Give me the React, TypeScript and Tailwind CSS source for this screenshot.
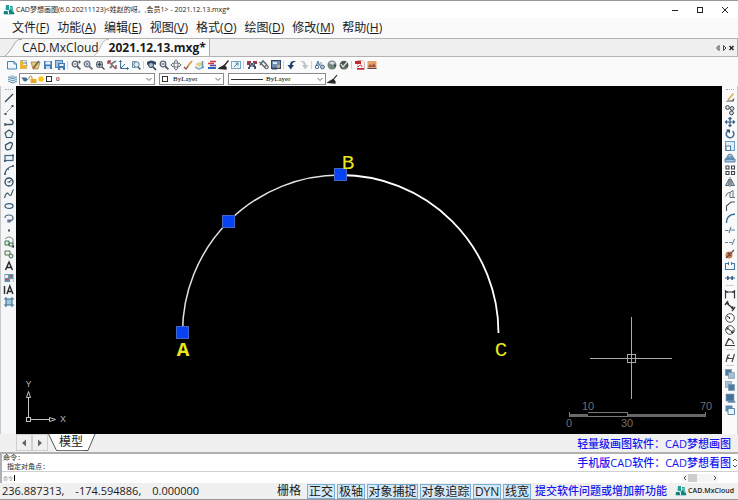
import { Fragment, type ReactNode } from "react";

type Tool = { name: string; art: ReactNode };

const lens = (color: string) => (
  <g fill="none" stroke={color}>
    <circle cx="5" cy="5" r="2.8" strokeWidth="1.3" />
    <path d="M7 7l3.4 3.4" strokeWidth="2" />
  </g>
);

const fileTools: Tool[][] = [
  [
    {
      name: "新建",
      art: <path d="M1.5 2.5h6.5l2.5 2.5v5h-9zM8 2.5v2.5h2.5" fill="#eef7fd" stroke="#4584b0" />,
    },
    {
      name: "打开",
      art: (
        <>
          <path d="M2.5 1.5h6v8h-6z" fill="#f4f7f9" stroke="#9fb3bf" />
          <path d="M2 2h3v8H2zM4 6h6l-2 4H2z" fill="#e9b53b" />
          <path d="M5 4h4" stroke="#5b7d95" />
        </>
      ),
    },
    {
      name: "打开图纸",
      art: (
        <>
          <path d="M1 3h9L8 10H3z" fill="#e6c877" stroke="#8c7a4c" strokeWidth=".7" />
          <path d="M4 8l5-6" stroke="#56606b" strokeWidth="1.4" />
          <path d="M3 9l2-1" stroke="#c6432f" strokeWidth="1.5" />
        </>
      ),
    },
    {
      name: "保存",
      art: (
        <>
          <rect x="2" y="2" width="8" height="8" fill="#3f7cb8" />
          <rect x="3.5" y="2.5" width="5" height="3" fill="#e8f1f8" />
          <rect x="4" y="7" width="4" height="3" fill="#c7dbea" />
        </>
      ),
    },
    {
      name: "另存为",
      art: (
        <>
          <rect x="1.5" y="1.5" width="7" height="7" fill="#9fc3df" stroke="#4785b5" />
          <rect x="4" y="4" width="7" height="7" fill="#3f7cb8" />
          <path d="M5.5 5h4v2h-4zM6 9h3v2H6z" fill="#e8f1f8" />
        </>
      ),
    },
  ],
  [
    {
      name: "实时缩放",
      art: (
        <>
          {lens("#5a6470")}
          <path d="M8 3h3M9.5 1.5v3M3.5 5h3" stroke="#46525f" strokeWidth=".9" />
        </>
      ),
    },
    {
      name: "放大",
      art: (
        <>
          {lens("#6a7681")}
          <path d="M3.5 5h3M5 3.5v3" stroke="#425e80" strokeWidth=".9" />
        </>
      ),
    },
    {
      name: "窗口缩放",
      art: (
        <>
          <rect x="2.5" y="2.5" width="6" height="6" rx="2" fill="#bac2ca" stroke="#55616b" />
          <path d="M3.5 5.5h4M5.5 3.5v4M8 8l2.5 2.5" stroke="#414c56" strokeWidth="1.3" />
        </>
      ),
    },
    {
      name: "范围缩放",
      art: (
        <>
          <path d="M2 2l8 8M2 2h3M2 2v3M10 10V6" stroke="#984b51" strokeWidth="1.4" fill="none" />
          <path d="M5 5l5-3M4 9l3-3" stroke="#737e89" strokeWidth="1.8" />
        </>
      ),
    },
    {
      name: "坐标系",
      art: <path d="M2.5 1.5v8h8M1.2 3l1.3-1.5L3.8 3M9 8.2l1.5 1.3L9 10.8M3 9l4-4" fill="none" stroke="#3c719b" />,
    },
    {
      name: "上一个视图",
      art: (
        <>
          <path d="M2.5 2.5h3M2.5 2.5v6h3" fill="none" stroke="#5a8cb0" />
          <circle cx="6.5" cy="5.5" r="2.7" fill="#e2eef5" stroke="#567792" />
          <path d="M8 8l2.4 2.4" stroke="#456078" strokeWidth="1.6" />
        </>
      ),
    },
  ],
  [
    {
      name: "重生成",
      art: (
        <>
          <path d="M1 3q4-3 9 0v3q-4-3-9 0z" fill="#33496a" />
          <circle cx="5" cy="6" r="2.5" fill="#aab9c9" stroke="#2d405c" />
          <path d="M7 8l3 3" stroke="#2d405c" strokeWidth="1.7" />
        </>
      ),
    },
    {
      name: "缩小",
      art: (
        <>
          {lens("#586777")}
          <path d="M3.5 5h3" stroke="#28435e" />
        </>
      ),
    },
    {
      name: "平移",
      art: (
        <path
          d="M6 .8l2 2.4H7v1.8h1.8V4l2.4 2-2.4 2V7H7v1.8h1l-2 2.4-2-2.4h1V7H3.2v1L.8 6l2.4-2v1H5V3.2H4z"
          fill="#f2f3f4"
          stroke="#59636d"
          strokeWidth=".9"
        />
      ),
    },
    {
      name: "画笔",
      art: (
        <>
          <path d="M5 8l5-6" stroke="#d59845" strokeWidth="1.8" />
          <path d="M2 8l2 2 2-2.500" stroke="#834d3e" fill="none" strokeWidth="1.2" />
        </>
      ),
    },
    {
      name: "图层管理",
      art: (
        <>
          <path d="M1 5l5-2 4 2-5 3z" fill="#dcd681" />
          <path d="M1 7l4 2 5-2v2l-5 2-4-2z" fill="#8bb3cc" />
          <path d="M8.5 2v7" stroke="#5d97c0" strokeWidth="1.5" />
        </>
      ),
    },
    {
      name: "颜色",
      art: (
        <>
          <path d="M4 2.500h6M2 4.500h6" stroke="#cf3a41" strokeWidth="1.6" />
          <path d="M4 6.500h6" stroke="#5d4a9e" strokeWidth="1.6" />
          <path d="M2 9h8" stroke="#2868bd" strokeWidth="2" />
        </>
      ),
    },
    {
      name: "格式刷",
      art: <path d="M10.5 1.5L6 7M1 9.500l5-3 2 2v1.5z" stroke="#22262a" strokeWidth="1.3" fill="#22262a" />,
    },
    {
      name: "适应窗口",
      art: (
        <>
          <rect x="1.5" y="2.5" width="9" height="7" fill="#ecf6fb" stroke="#72a7c7" />
          <path d="M4 8l4-4M5.5 4H8v2.5" fill="none" stroke="#3d84a8" />
        </>
      ),
    },
  ],
  [
    {
      name: "图块",
      art: (
        <>
          <path d="M1 2h4v4H1zM7 2h4v3H7z" fill="#9d354b" />
          <path d="M3 4h6v4H3zM2 8h2v2H2zM8 7h2v3H8z" fill="#46526e" />
          <path d="M4 5h1M7 5h1M5 7h2" stroke="#e3e5ec" />
        </>
      ),
    },
    {
      name: "工具",
      art: (
        <>
          <path d="M1.5 3l6 6M2 6l3-4 4 4" fill="none" stroke="#646a72" strokeWidth="1.5" />
          <circle cx="8.5" cy="8" r="1.8" fill="#c9ccd0" stroke="#55595f" />
        </>
      ),
    },
    {
      name: "插入图片",
      art: (
        <>
          <rect x="1.5" y="1.5" width="9" height="8" fill="#7190b1" stroke="#304865" />
          <path d="M3 3h4v2H3z" fill="#dce6ef" />
          <path d="M7 6h3v3H7z" fill="#dba071" />
          <path d="M2 8.500h5v2H2z" fill="#304865" />
        </>
      ),
    },
  ],
  [
    { name: "撤销", art: <path d="M10 2.500C6 1 4 3 4 6H1.500l3.300 4.500L8 6H6.200C6 4.200 7.500 3 10 2.500z" fill="#22406f" /> },
    { name: "重做", art: <path d="M2 2.500C6 1 8 3 8 6h2.500l-3.300 4.500L4 6h1.800C6 4.200 4.500 3 2 2.500z" fill="#c1c5c9" /> },
  ],
  [
    {
      name: "查找",
      art: (
        <>
          <path d="M2 7l2-5 2 5M3 5h2" fill="none" stroke="#55799b" />
          <circle cx="3" cy="8" r="1.7" fill="none" stroke="#47698a" />
          <circle cx="8.5" cy="8" r="1.9" fill="#b7cbdc" stroke="#47698a" />
          <path d="M7 3v4" stroke="#7790a6" />
        </>
      ),
    },
    {
      name: "网络",
      art: (
        <>
          <circle cx="6" cy="6" r="4.5" fill="#76808a" />
          <path d="M3 4q3-3 6 0l-2 2-2-1z" fill="#d5dade" />
          <path d="M3 7l2-1 2 3-2 1z" fill="#5b9b52" />
          <path d="M8 5l2 1-1 3z" fill="#353d46" />
        </>
      ),
    },
    {
      name: "云图",
      art: (
        <>
          <circle cx="6" cy="6.2" r="4.4" fill="#4c5851" />
          <path d="M3 5l2 3 4-5" fill="none" stroke="#e1e8e3" strokeWidth="1.3" />
          <path d="M5 9h4" stroke="#82a07a" />
        </>
      ),
    },
  ],
  [
    {
      name: "输出PDF",
      art: (
        <>
          <path d="M3.5 1.500h5l2 2v7h-7z" fill="#fbf5f5" stroke="#c9a3a5" strokeWidth=".8" />
          <path d="M1 2h6v3H1zM3 9h7v1.500H3z" fill="#c6272e" />
          <path d="M4 8q3-4 4 0" fill="none" stroke="#c6272e" />
        </>
      ),
    },
    {
      name: "输出图片",
      art: (
        <>
          <rect x="1.5" y="2" width="9" height="8" fill="#e4a26f" />
          <path d="M2 8l2-3 2 1.500L8 4l2 4z" fill="#a3593e" />
          <path d="M1.5 9.500h9" stroke="#524c5b" />
        </>
      ),
    },
  ],
];

const drawTools: Tool[] = [
  { name: "直线", art: <path d="M2 10l8-8" stroke="#2f4859" strokeWidth="1.2" /> },
  {
    name: "构造线",
    art: (
      <>
        <path d="M2 10l8-8" stroke="#5b6f7c" strokeDasharray="2 1" />
        <path d="M1.5 9h2v2h-2zM8.5 1h2v2h-2z" fill="#3a505d" />
      </>
    ),
  },
  { name: "多段线", art: <path d="M2 8.500h6q2.500 0 2-2.500t-3-2M2 7v3" fill="none" stroke="#38505f" strokeWidth="1.3" /> },
  { name: "多边形", art: <path d="M6 2l4 3-1.500 4.500h-5L2 5z" fill="#eef3f5" stroke="#3d5561" strokeWidth="1.2" /> },
  { name: "云线", art: <path d="M7 2.500q3.500 0 2 3L7.500 9q-4 2-5-1V5z" fill="#eef3f5" stroke="#3d5561" strokeWidth="1.3" /> },
  {
    name: "矩形",
    art: (
      <>
        <rect x="2" y="3.5" width="8" height="5" fill="#eef3f7" stroke="#41627a" strokeWidth="1.2" />
        <path d="M1 8h2v2H1zM9 2.500h2v2H9z" fill="#41627a" />
      </>
    ),
  },
  {
    name: "圆弧",
    art: (
      <>
        <path d="M2 10Q2.500 3.500 10 2" fill="none" stroke="#38536a" strokeWidth="1.2" />
        <path d="M1 9h2v2H1zM4 4h2v2H4zM9 1h2v2H9z" fill="#56758a" />
      </>
    ),
  },
  {
    name: "圆",
    art: (
      <>
        <circle cx="6" cy="6" r="4" fill="none" stroke="#2e4b60" strokeWidth="1.3" />
        <path d="M6 6l3-2.500M4.500 6h3" stroke="#2e4b60" />
      </>
    ),
  },
  { name: "样条曲线", art: <path d="M1.5 10q2-7 4-4t3 0T10.500 1.500" fill="none" stroke="#455a67" strokeWidth="1.2" /> },
  { name: "椭圆", art: <ellipse cx="6" cy="6" rx="4" ry="2.4" fill="none" stroke="#385d7d" strokeWidth="1.3" /> },
  { name: "椭圆弧", art: <path d="M2 6q0-3 4-3t4 3-4 3M5 8h2v2H5z" fill="none" stroke="#486782" strokeWidth="1.2" /> },
  { name: "点", art: <rect x="5" y="5.5" width="2" height="2" fill="#3e5669" /> },
  {
    name: "插入块",
    art: (
      <>
        <path d="M2 3q4-4 8 0v5" fill="none" stroke="#759079" />
        <path d="M2 5h4v4H2zM6 7h4v3H6z" fill="#deeadd" stroke="#3f7357" />
        <path d="M11 9v2.500H8.500z" fill="#20282b" />
      </>
    ),
  },
  {
    name: "创建块",
    art: (
      <>
        <path d="M2 3h5v4H2z" fill="#ebf0ea" stroke="#556e52" />
        <circle cx="8" cy="8" r="2" fill="#e3ebe1" stroke="#3f6952" />
      </>
    ),
  },
  { name: "文字", art: <path d="M2.5 10L6 2l3.500 8M3.800 7.500h4.400" fill="none" stroke="#262b2f" strokeWidth="1.5" /> },
  {
    name: "填充",
    art: (
      <>
        <rect x="1.5" y="2" width="9" height="8" fill="#6596ae" />
        <path d="M2 3h3v3H2zM7 7h3v3H7z" fill="#e4ecef" />
        <path d="M2.5 6.500h3v2h-3zM7 3h2v2H7z" fill="#bd5359" />
      </>
    ),
  },
  { name: "多行文字", art: <path d="M1.5 2v8M4 10l2.800-8L10 10M5 7.500h4" fill="none" stroke="#262b2f" strokeWidth="1.4" /> },
  {
    name: "边界",
    art: (
      <>
        <rect x="3" y="3" width="6" height="6" fill="#9dc7df" />
        <path d="M3 1v10M9 1v10M1 3h10M1 9h10" stroke="#3e6f8f" strokeWidth="1.1" />
      </>
    ),
  },
];

const stack = (front: string, back: string) => (
  <>
    <rect x="1.5" y="1.5" width="6" height="6" fill={back} stroke="#7394ac" strokeWidth=".6" />
    <rect x="4.5" y="4.5" width="6" height="6" fill={front} stroke="#7394ac" strokeWidth=".6" />
  </>
);

const editTools: Tool[][] = [
  [
    {
      name: "删除",
      art: (
        <>
          <path d="M4 8l5.500-6.500" stroke="#d9b465" strokeWidth="1.8" />
          <path d="M1.5 9.500h8L10.500 6l-3 2.500H3.500z" fill="#4a5353" />
        </>
      ),
    },
    {
      name: "复制",
      art: (
        <g fill="#d9dee2" stroke="#3d4850">
          <circle cx="3.5" cy="3.5" r="1.9" />
          <circle cx="8" cy="4.5" r="1.9" />
          <circle cx="7.5" cy="9" r="1.9" />
        </g>
      ),
    },
    {
      name: "移动",
      art: (
        <path
          d="M6 1.500v9M1.500 6h9M4.500 3L6 1.500 7.500 3M4.500 9L6 10.500 7.500 9M3 4.500L1.500 6 3 7.500M9 4.500L10.500 6 9 7.500"
          fill="none"
          stroke="#345d89"
          strokeWidth="1.2"
        />
      ),
    },
    {
      name: "旋转",
      art: (
        <>
          <path d="M4 2.800a3.800 3.800 0 1 0 4.500.3" fill="none" stroke="#426f9d" strokeWidth="1.6" />
          <path d="M2 1.500h4v4z" fill="#29496c" />
        </>
      ),
    },
    {
      name: "缩放",
      art: (
        <>
          <rect x="1.5" y="1.5" width="9" height="9" fill="#deedf7" stroke="#6a9dc2" />
          <rect x="2" y="6" width="4.5" height="4.5" fill="#fff" stroke="#497ca3" />
        </>
      ),
    },
    {
      name: "偏移",
      art: <path d="M2 7l2-4 2-1 2 1 2 4zM1 10V7h10v3zM4 7V5h4v2" fill="#a9c5dc" stroke="#47779d" strokeWidth=".9" />,
    },
    {
      name: "阵列",
      art: (
        <path
          d="M2 2h3v3H2zM7.5 2h3v3h-3zM2 7.500h3v3H2zM7.5 7.500h3v3h-3z"
          fill="#f6f6f6"
          stroke="#3d444b"
          strokeWidth="1.1"
        />
      ),
    },
    { name: "镜像", art: <path d="M5 3v6.500H1.500zM7 3v6.500h3.500zM6 1v10" fill="#aebac4" stroke="#4f606e" strokeWidth=".9" /> },
    { name: "拉伸", art: <path d="M1.5 8.500q2-5 4.500-4v5M6 4.500l3-2v7M6 9.500h5" fill="none" stroke="#65717b" /> },
    { name: "倒角", art: <path d="M2.5 11V6L7 2h4" fill="none" stroke="#45525d" strokeWidth="1.1" /> },
    { name: "圆角", art: <path d="M2.5 11Q2 3 11 2" fill="none" stroke="#386c9c" strokeWidth="1.4" /> },
    { name: "修剪", art: <path d="M1 6.500h3.500M7 6h4M7 3L5 9" fill="none" stroke="#597f9d" strokeWidth="1.1" /> },
    { name: "延伸", art: <path d="M1 6.500h3M5 6.500h3M10.500 3L8 9" fill="none" stroke="#66869e" strokeWidth="1.1" /> },
    {
      name: "分解",
      art: (
        <>
          <circle cx="5" cy="7" r="3.5" fill="#ca8254" />
          <path d="M4 8l6-6M2 10l2-2M4 5l3 3" stroke="#654439" strokeWidth="1.2" />
        </>
      ),
    },
    { name: "打断", art: <path d="M4.5 3.500h-3v6h9v-6h-3M4.500 2v3M7.500 2v3" fill="none" stroke="#4278a0" strokeWidth="1.1" /> },
    { name: "合并", art: <path d="M1 6h4M11 6H7M3.500 4L5.500 6l-2 2zM8.500 4l-2 2 2 2z" fill="#355f89" stroke="#355f89" /> },
  ],
  [
    { name: "线性标注", art: <path d="M1.5 2v8.500M10.500 2v8.500M1.500 4h9M3 3v2M9 3v2" fill="none" stroke="#30363b" strokeWidth="1.2" /> },
    {
      name: "对齐标注",
      art: <path d="M2.5 3l7 6M1 5l3-4M8 11l3-4M3 3.500h2M7.500 8.500l1.500-2" fill="none" stroke="#2c3237" strokeWidth="1.3" />,
    },
    {
      name: "半径标注",
      art: (
        <>
          <circle cx="6" cy="6" r="4.3" fill="none" stroke="#4d5459" />
          <path d="M6 6L3 4M5.500 5v2" stroke="#2c3237" />
        </>
      ),
    },
    {
      name: "直径标注",
      art: (
        <>
          <circle cx="6" cy="6" r="4.3" fill="none" stroke="#4d5459" />
          <path d="M3 4l6 4.500M3 6V4h2M9 6v2.500H7" fill="none" stroke="#2c3237" />
        </>
      ),
    },
    { name: "角度标注", art: <path d="M5 2L1.500 9.500H11M5 3q4 1 4.500 5M3 5l3-2" fill="none" stroke="#363c41" strokeWidth="1.2" /> },
  ],
  [
    {
      name: "快速标注",
      art: <path d="M2 10L4 3M8 10l2.500-8M3 6.500h6M4 3h2M4.500 5l-1.500 2" fill="none" stroke="#42484d" strokeWidth="1.2" />,
    },
  ],
  [
    { name: "前置", art: stack("#a6bfd3", "#4d7ba5") },
    { name: "后置", art: stack("#4d7ba5", "#a6bfd3") },
    { name: "置于对象之上", art: <path d="M2 2h8v7H2zM4 9h7v1.500H4z" fill="#467199" stroke="#7e9eb8" strokeWidth=".6" /> },
    {
      name: "置于对象之下",
      art: (
        <>
          <path d="M1.5 1.500h7v6h-7z" fill="#5a87ac" />
          <path d="M4 4.500h6.500v6H4z" fill="#edf4f9" stroke="#5a87ac" />
        </>
      ),
    },
  ],
];

const menus = [
  ["文件", "F"],
  ["功能", "A"],
  ["编辑", "E"],
  ["视图", "V"],
  ["格式", "O"],
  ["绘图", "D"],
  ["修改", "M"],
  ["帮助", "H"],
];

const modes = [
  { label: "正交", width: "w-7" },
  { label: "极轴", width: "w-7" },
  { label: "对象捕捉", width: "w-[51px]" },
  { label: "对象追踪", width: "w-[51px]" },
  { label: "DYN", width: "w-7" },
  { label: "线宽", width: "w-7" },
];

function Icon({ children }: { children: ReactNode }) {
  return (
    <svg viewBox="0 0 12 12" className="block size-3 shrink-0" aria-hidden="true">
      {children}
    </svg>
  );
}

function ToolButton({ tool }: { tool: Tool }) {
  return (
    <button title={tool.name} aria-label={tool.name} className="block size-3 shrink-0">
      <Icon>{tool.art}</Icon>
    </button>
  );
}

function Logo() {
  return (
    <Icon>
      <path d="M3 1h3v5H2.500zM7 2h2.500L10 6H7z" fill="#1d9d94" />
      <path d="M1 7h4v3H.5zM6 6h4l1.500 4H6z" fill="#14807f" />
      <path d="M2 4l3 4 3-5 2 5M1 10.500h10" stroke="#8fd2cd" strokeWidth=".8" fill="none" />
    </Icon>
  );
}

function Chevron() {
  return (
    <svg viewBox="0 0 8 8" className="pointer-events-none size-2 shrink-0" aria-hidden="true">
      <path d="M1.5 3L4 5.500 6.500 3" fill="none" stroke="#666" />
    </svg>
  );
}

function Combo({ label, value, width, children }: { label: string; value: string; width: string; children?: ReactNode }) {
  return (
    <div className={`flex h-3 items-center border border-[#8c8c8c] bg-white pr-px ${width}`}>
      {children}
      <select
        aria-label={label}
        className="h-full min-w-0 flex-1 appearance-none bg-transparent font-['Liberation_Serif','Noto_Sans_CJK_SC',serif] text-[7px] leading-[10px] text-black outline-none"
      >
        <option>{value}</option>
      </select>
      <Chevron />
    </div>
  );
}

function Drawing() {
  return (
    <svg viewBox="0 0 706 347" className="block h-auto w-full" role="img" aria-label="模型空间">
      <path d="M166.5 247A158 158 0 0 1 324.500 89" fill="none" stroke="#e2e2e2" strokeWidth="1.5" />
      <path d="M324.5 89A158 158 0 0 1 482.500 247" fill="none" stroke="#fff" strokeWidth="1.8" />
      <g fill="#0842f5" stroke="#3f68c8" strokeWidth="1">
        <rect x="160.5" y="240.5" width="12" height="12" />
        <rect x="206.5" y="129.5" width="12" height="12" />
        <rect x="318.5" y="82.5" width="12" height="12" />
      </g>
      <g fill="#e8e81c" fontFamily="Liberation Mono, monospace" fontSize="21" textAnchor="middle">
        <text x="167" y="270" fontWeight="700">A</text>
        <text x="332" y="83">B</text>
        <text x="485" y="270">C</text>
      </g>

      <g fill="none" stroke="#c4c4c4">
        <rect x="10.5" y="331.5" width="4" height="4" />
        <path d="M12.5 331v-20M10.500 311.500l2-6 2 6zM15 333.500h18M33.500 331.500l6 2-6 2z" />
      </g>
      <g fill="#b5b5b5" fontFamily="Liberation Sans, sans-serif" fontSize="9" textAnchor="middle">
        <text x="12.5" y="301">Y</text>
        <text x="47" y="336">X</text>
      </g>

      <g fill="none" stroke="#a9a9a9">
        <path d="M574 272.500h82M615.500 231v82" />
        <rect x="611.5" y="268.5" width="8" height="8" />
      </g>

      <path d="M553 328h19v3h-19zM611 328h79v3h-79z" fill="#686868" />
      <path d="M553.5 326v5M572 326.500h39M572 330.500h39M611.500 326v5M689.500 326v5" stroke="#777" fill="none" />
      <g fill="#6f6f6f" fontFamily="Liberation Sans, sans-serif" fontSize="11" textAnchor="middle">
        <text x="572" y="324">10</text>
        <text x="690" y="324">70</text>
        <text x="553" y="341">0</text>
        <text x="611" y="341">30</text>
      </g>
    </svg>
  );
}

export default function App() {
  return (
    <div className="flex min-h-screen flex-col bg-[#f0f0f0] font-['Open_Sans','Noto_Sans_CJK_SC',sans-serif] text-xs text-[#1c1c1c]">
      <header className="flex h-[18px] items-center justify-between border-t border-[#999] bg-white pr-[7px] pl-[3px]">
        <div className="flex items-center gap-px">
          <Logo />
          <h1 className="text-[7px] leading-3 whitespace-nowrap">
            CAD梦想画图(6.0.20211123)&lt;姓赵的呀。,会员1&gt; - 2021.12.13.mxg*
          </h1>
        </div>
        <div className="flex items-center gap-[13px]">
          <button aria-label="最小化">
            <Icon><path d="M3 6.500h6" stroke="#222" /></Icon>
          </button>
          <button aria-label="最大化">
            <Icon><rect x="3.5" y="3.5" width="5" height="5" fill="none" stroke="#222" /></Icon>
          </button>
          <button aria-label="关闭">
            <Icon><path d="M3 3l6 6M9 3L3 9" stroke="#222" /></Icon>
          </button>
        </div>
      </header>

      <nav className="flex h-5 items-center gap-2 bg-[#fafafa] pl-3">
        {menus.map(([label, key]) => (
          <button key={key} className="text-xs leading-4 whitespace-nowrap">
            {label}(<span className="underline">{key}</span>)
          </button>
        ))}
      </nav>

      <div className="flex h-[19px] items-stretch justify-between border-y border-[#b3b3b3] pl-1">
        <div className="flex items-stretch">
          <button className="flex items-center leading-4">
            <svg viewBox="0 0 18 17" className="block h-full w-[18px]" aria-hidden="true">
              <path d="M1 17Q5 14 9 7T16 .5h2V17z" fill="#f7f7f7" />
              <path d="M1 17Q5 14 9 7T16 .5h2" fill="none" stroke="#aaa" />
            </svg>
            <span className="flex h-full items-center bg-[#f7f7f7] whitespace-nowrap">CAD.MxCloud</span>
          </button>
          <button className="-ml-2 flex items-center leading-4 font-bold">
            <svg viewBox="0 0 18 17" className="block h-full w-[18px]" aria-hidden="true">
              <path d="M3 17Q7 14 10 7T17 0h1v17z" fill="#fcfcfc" />
              <path d="M3 17Q7 14 10 7T17 .5h1" fill="none" stroke="#bbb" />
            </svg>
            <span className="flex h-full items-center border-r border-[#aaa] bg-[#fcfcfc] pr-[3px] whitespace-nowrap">
              2021.12.13.mxg*
            </span>
          </button>
        </div>
        <div className="flex items-center border-r border-[#b3b3b3] pr-0.5">
          <button aria-label="上一个标签" className="w-[7px]">
            <svg viewBox="0 0 7 8" className="block h-2 w-[7px]"><path d="M5 1.500v5L2.500 4z" fill="none" stroke="#444" /></svg>
          </button>
          <button aria-label="下一个标签" className="w-[7px]">
            <svg viewBox="0 0 7 8" className="block h-2 w-[7px]"><path d="M2.5 1.500v5L5 4z" fill="none" stroke="#444" /></svg>
          </button>
          <button aria-label="关闭标签" className="w-[7px]">
            <svg viewBox="0 0 7 8" className="block h-2 w-[7px]"><path d="M1.5 2l4 4M5.500 2l-4 4" stroke="#222" strokeWidth="1.4" /></svg>
          </button>
        </div>
      </div>

      <div className="bg-[#fafafa]">
        <div className="flex h-[15px] items-center pl-[6px]">
          {fileTools.map((group, i) => (
            <Fragment key={group[0].name}>
              {i > 0 && <span className="mr-0.5 ml-px h-2 w-px bg-[#d0d0d0]" />}
              {group.map((tool) => (
                <ToolButton key={tool.name} tool={tool} />
              ))}
            </Fragment>
          ))}
        </div>
        <div className="flex h-[14px] items-center pl-[6px]">
          <Icon>
            <path d="M2 4l4-2 5 2-4 2z" fill="#a8c7dc" />
            <path d="M2 6l5 2 4-2M2 8l5 2 4-2M2 4l5 2 4-2" fill="none" stroke="#5f8dab" />
          </Icon>
          <div className="flex gap-1 pl-px">
            <Combo label="图层" value="0" width="w-[136px]">
              <svg viewBox="0 0 36 10" className="h-[10px] w-9 shrink-0" aria-hidden="true">
                <path d="M1 3.500h5l2 2-2 2q-3 0-3-2z" fill="#3d6d91" />
                <path d="M9 5.500V3q1.500-2 3 0v2" fill="none" stroke="#ba8830" />
                <path d="M10.5 5h6v4h-6z" fill="#e8a72d" />
                <circle cx="21" cy="5" r="2.8" fill="#ffc51f" />
                <rect x="26.5" y="2.5" width="5" height="5" fill="#fff" stroke="#333" />
              </svg>
            </Combo>
            <Combo label="颜色" value="ByLayer" width="w-[65px]">
              <span className="mr-[5px] ml-0.5 size-[6px] shrink-0 border border-[#333] bg-white" />
            </Combo>
            <Combo label="线型" value="ByLayer" width="w-[98px]">
              <span className="mr-[3px] ml-0.5 h-px w-8 shrink-0 bg-[#333]" />
            </Combo>
          </div>
          <button aria-label="线型刷" className="pl-px">
            <Icon><path d="M10 2L6 7M1 9.500l5-3 2 2v1.500z" stroke="#22262a" strokeWidth="1.2" fill="#22262a" /></Icon>
          </button>
        </div>
      </div>

      <main className="flex flex-1">
        <aside className="flex w-4 shrink-0 flex-col items-center border-l border-[#c8c8c8] bg-[#f5f6f8]">
          <span className="mt-[3px] mb-0.5 h-px w-2 border-t border-dotted border-[#aaa]" />
          {drawTools.map((tool) => (
            <ToolButton key={tool.name} tool={tool} />
          ))}
        </aside>
        <div className="min-w-0 flex-1 bg-black">
          <Drawing />
        </div>
        <aside className="flex w-4 shrink-0 flex-col items-center border-r border-[#c8c8c8] bg-[#fafafa]">
          {editTools.map((group, i) => (
            <Fragment key={group[0].name}>
              {i > 0 ? (
                <span className="mt-px mb-0.5 h-px w-2 bg-[#ccc]" />
              ) : (
                <span className="mt-[3px] mb-0.5 h-px w-2 border-t border-dotted border-[#aaa]" />
              )}
              {group.map((tool) => (
                <ToolButton key={tool.name} tool={tool} />
              ))}
            </Fragment>
          ))}
        </aside>
      </main>

      <div className="flex h-[18px] items-stretch justify-between pr-[7px] pl-4">
        <div className="flex items-stretch pb-px">
          <button aria-label="向左" className="flex w-4 items-center justify-center border border-[#d0d0d0]">
            <svg viewBox="0 0 6 8" className="h-2 w-[6px]"><path d="M5 .5v7L1 4z" fill="#666" /></svg>
          </button>
          <button aria-label="向右" className="flex w-4 items-center justify-center border border-[#d0d0d0]">
            <svg viewBox="0 0 6 8" className="h-2 w-[6px]"><path d="M1 .5v7L5 4z" fill="#666" /></svg>
          </button>
          <button className="flex items-stretch leading-4">
            <svg viewBox="0 0 10 17" className="h-full w-[10px]" aria-hidden="true">
              <path d="M0 0h10v17H8z" fill="#fff" />
              <path d="M.5 0l8 16.500H10" fill="none" stroke="#555" />
            </svg>
            <span className="border-b border-[#777] bg-white px-px">模型</span>
            <svg viewBox="0 0 12 17" className="h-full w-3" aria-hidden="true">
              <path d="M0 0h11L4 17H0z" fill="#fff" />
              <path d="M11 0L4 16.500H0" fill="none" stroke="#555" />
            </svg>
          </button>
        </div>
        <a href="#draw" className="self-end text-[11px] leading-4 font-medium whitespace-nowrap text-[#1616f0]">
          轻量级画图软件：CAD梦想画图
        </a>
      </div>

      <section className="border-t-2 border-l-2 border-[#b0b0b0] bg-white">
        <div className="flex h-[18px] justify-between overflow-hidden border-b border-[#d0d0d0]">
          <div className="pl-px font-['Liberation_Mono','Noto_Sans_CJK_SC',monospace] text-[7px] leading-[9px]">
            <p>命令:</p>
            <p className="pl-1">指定对角点:</p>
          </div>
          <div className="flex items-center">
            <a href="#view" className="text-[11px] leading-4 font-medium whitespace-nowrap text-[#1616f0]">
              手机版CAD软件：CAD梦想看图
            </a>
            <span className="flex w-[7px] flex-col items-center">
              <svg viewBox="0 0 6 12" className="h-3 w-[6px]" aria-hidden="true">
                <path d="M1 4l2-2 2 2M1 8l2 2 2-2" fill="none" stroke="#555" />
              </svg>
            </span>
          </div>
        </div>
        <div className="flex h-[11px] items-center justify-between pr-5">
          <label className="flex flex-1 items-center gap-px pl-px text-[5px] leading-[8px] whitespace-nowrap text-[#777]">
            <span>命令</span>
            <span className="h-[6px] w-px bg-black" />
            <input aria-label="命令输入" className="h-[10px] min-w-0 flex-1 bg-transparent text-[7px] text-black outline-none" />
          </label>
          <div className="flex h-2 w-9 items-center bg-[#f5f5f5]">
            <svg viewBox="0 0 6 8" className="h-2 w-[6px]" aria-hidden="true"><path d="M4 2L2 4l2 2" fill="none" stroke="#444" /></svg>
            <span className="h-2 w-[9px] bg-[#cdcdcd]" />
            <svg viewBox="0 0 6 8" className="ml-auto h-2 w-[6px]" aria-hidden="true"><path d="M2 2l2 2-2 2" fill="none" stroke="#444" /></svg>
          </div>
        </div>
      </section>

      <footer className="flex h-[17px] items-center border-b border-[#999] pr-1 pl-0.5 whitespace-nowrap">
        <output className="flex gap-[11px] text-[11px] leading-4">
          <span>236.887313,</span>
          <span>-174.594886,</span>
          <span>0.000000</span>
        </output>
        <div className="ml-auto flex items-center gap-[2px]">
          <button className="mr-1 leading-[14px]">栅格</button>
          {modes.map((mode) => (
            <button
              key={mode.label}
              aria-pressed="true"
              className={`h-[15px] border border-[#79aed5] bg-[#d5e9f8] text-center text-xs leading-[13px] ${mode.width}`}
            >
              {mode.label}
            </button>
          ))}
        </div>
        <a href="#feedback" className="mr-2 ml-1 text-[11px] leading-4 font-medium text-[#1616f0]">
          提交软件问题或增加新功能
        </a>
        <div className="flex items-center gap-px">
          <Logo />
          <span className="text-[7px] leading-3 font-semibold">CAD.MxCloud</span>
        </div>
      </footer>
    </div>
  );
}
